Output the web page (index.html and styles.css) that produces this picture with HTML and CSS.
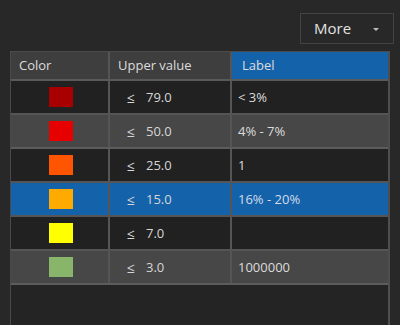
FILE: index.html
```html
<!DOCTYPE html>
<html lang="en">

<head>
  <meta charset="utf-8">
  <title>Classes</title>
  <link rel="stylesheet" href="styles.css">
</head>

<body>
  <div id="toolbar">
    <button id="more">
      <span>More</span>
      <span class="caret"></span>
    </button>
  </div>
  <div id="panel">
    <div class="row head">
      <div class="cell">Color</div>
      <div class="cell">Upper value</div>
      <div class="cell active">Label</div>
    </div>
    <div class="row">
      <div class="cell sw"><span class="swatch" style="background:#a80000"></span></div>
      <div class="cell val"><span class="le">≤</span>79.0</div>
      <div class="cell">&lt; 3%</div>
    </div>
    <div class="row alt">
      <div class="cell sw"><span class="swatch" style="background:#e60000"></span></div>
      <div class="cell val"><span class="le">≤</span>50.0</div>
      <div class="cell">4% - 7%</div>
    </div>
    <div class="row">
      <div class="cell sw"><span class="swatch" style="background:#ff5500"></span></div>
      <div class="cell val"><span class="le">≤</span>25.0</div>
      <div class="cell">1</div>
    </div>
    <div class="row sel">
      <div class="cell sw"><span class="swatch" style="background:#ffaa00"></span></div>
      <div class="cell val"><span class="le">≤</span>15.0</div>
      <div class="cell">16% - 20%</div>
    </div>
    <div class="row">
      <div class="cell sw"><span class="swatch" style="background:#ffff00"></span></div>
      <div class="cell val"><span class="le">≤</span>7.0</div>
      <div class="cell"></div>
    </div>
    <div class="row alt">
      <div class="cell sw"><span class="swatch" style="background:#89b56b"></span></div>
      <div class="cell val"><span class="le">≤</span>3.0</div>
      <div class="cell">1000000</div>
    </div>
  </div>
</body>

</html>
```

FILE: styles.css
```css
* {
  box-sizing: border-box;
  margin: 0;
  padding: 0
}

html,
body {
  height: 100%
}

body {
  background: #282828;
  color: #dcdcdc;
  font-family: 'Open Sans', 'Noto Sans', sans-serif;
  font-size: 13px;
  overflow: hidden
}

#toolbar {
  display: flex;
  justify-content: flex-end;
  padding: 13px 6px 0 0;
  height: 51px
}

#more {
  width: 94px;
  height: 31px;
  display: flex;
  align-items: center;
  padding: 0 0 1px 13px;
  gap: 22px;
  background: #282828;
  border: 1px solid #434343;
  color: #e2e2e2;
  font: inherit;
  font-size: 15px
}

.caret {
  width: 0;
  height: 0;
  border-left: 3px solid transparent;
  border-right: 3px solid transparent;
  border-top: 3px solid #bdbdbd;
  margin-top: 2px
}

#panel {
  margin: 0 10px 0 10px;
  height: 274px;
  background: #242424;
  border-left: 1px solid #4a4a4a;
  border-right: 2px solid #4e4e4e;
  border-top: 1px solid #4a4a4a
}

.row {
  display: grid;
  grid-template-columns: 99px 122px 1fr;
  height: 34px;
  border-bottom: 2px solid #555;
  background: #212121
}

.row.head {
  height: 29px;
  background: #3e3e3e;
  border-bottom-color: #5a5a5a
}

.row.alt {
  background: #474747;
  border-bottom-color: #5c5c5c
}

.row.sel {
  background: #1462a9;
  color: #d2dcea
}

.cell {
  display: flex;
  align-items: center;
  padding-left: 6px;
  border-right: 2px solid #555
}

.cell:last-child {
  border-right: none
}

.head .cell {
  padding-left: 8px;
  padding-bottom: 1px
}

.head .cell.active {
  background: #1462a9;
  padding-left: 10px
}

.cell.sw {
  justify-content: center;
  padding-left: 0
}

.swatch {
  display: block;
  width: 24px;
  height: 20px;
  margin-left: 2px
}

.cell.val {
  padding-left: 17px;
  color: #d6d6d6
}

.le {
  width: 19px;
  font-size: 14px
}
```
